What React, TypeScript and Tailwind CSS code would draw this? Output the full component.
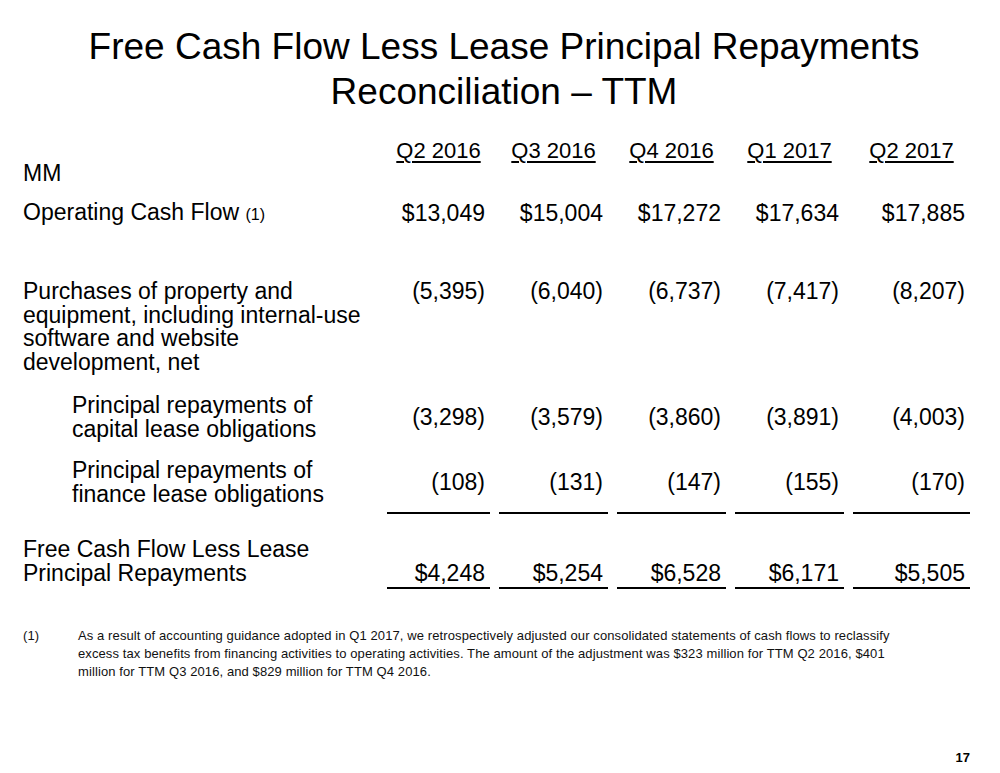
import React from "react";

const grid = "grid grid-cols-[355px_103px_109px_109px_109px_117px] gap-x-[9px]";

const headers = ["Q2 2016", "Q3 2016", "Q4 2016", "Q1 2017", "Q2 2017"];

const Values = ({ vals, align = "self-center" }: { vals: string[]; align?: string }) => (
  <>
    {vals.map((v, i) => (
      <div key={i} className={`${align} text-right pr-[5px] leading-[24px]`}>
        {v}
      </div>
    ))}
  </>
);

const Rule = ({ className }: { className: string }) => (
  <div className={`${grid} ${className}`}>
    <div />
    {headers.map((h) => (
      <div key={h} className="h-[2px] bg-black" />
    ))}
  </div>
);

export default function App() {
  return (
    <div className="w-[1000px] h-[773px] bg-white text-black font-['Liberation_Sans',Arial,sans-serif] overflow-hidden">
      <h1 className="pt-[24px] text-center text-[37px] leading-[45px] font-normal pl-[8px]">
        Free Cash Flow Less Lease Principal Repayments
        <br />
        Reconciliation – TTM
      </h1>

      <div className="pl-[23px] text-[23px]">
        {/* column headers */}
        <div className={`${grid} mt-[26px]`}>
          <div />
          {headers.map((h) => (
            <div
              key={h}
              className="text-center text-[22px] leading-none underline decoration-2 underline-offset-[3px]"
            >
              {h}
            </div>
          ))}
        </div>

        <div className="leading-[23px]">MM</div>

        <div className={`${grid} mt-[16px] leading-[23px]`}>
          <div className="whitespace-nowrap">
            Operating Cash Flow <span className="text-[16px]">(1)</span>
          </div>
          <Values vals={["$13,049", "$15,004", "$17,272", "$17,634", "$17,885"]} align="self-start" />
        </div>

        <div className={`${grid} mt-[54px]`}>
          <div className="whitespace-nowrap leading-[23.5px]">
            Purchases of property and
            <br />
            equipment, including internal-use
            <br />
            software and website
            <br />
            development, net
          </div>
          <Values vals={["(5,395)", "(6,040)", "(6,737)", "(7,417)", "(8,207)"]} align="self-start -mt-[1px]" />
        </div>

        <div className={`${grid} mt-[19px]`}>
          <div className="pl-[49px] whitespace-nowrap leading-[24px]">
            Principal repayments of
            <br />
            capital lease obligations
          </div>
          <Values vals={["(3,298)", "(3,579)", "(3,860)", "(3,891)", "(4,003)"]} />
        </div>

        <div className={`${grid} mt-[17px]`}>
          <div className="pl-[49px] whitespace-nowrap leading-[24px]">
            Principal repayments of
            <br />
            finance lease obligations
          </div>
          <Values vals={["(108)", "(131)", "(147)", "(155)", "(170)"]} />
        </div>

        <Rule className="mt-[6px]" />

        <div className={`${grid} mt-[24px]`}>
          <div className="whitespace-nowrap leading-[23.5px]">
            Free Cash Flow Less Lease
            <br />
            Principal Repayments
          </div>
          <Values vals={["$4,248", "$5,254", "$6,528", "$6,171", "$5,505"]} align="self-end" />
        </div>

        <Rule className="mt-[2px]" />
      </div>

      {/* footnote */}
      <div className="mt-[38px] pl-[23px] flex text-[13px] tracking-[0.1px] leading-[18px] text-[#111]">
        <div className="w-[55px] shrink-0">(1)</div>
        <div className="whitespace-nowrap">
          <div>
            As a result of accounting guidance adopted in Q1 2017, we retrospectively adjusted our consolidated statements of cash flows to reclassify
          </div>
          <div>
            excess tax benefits from financing activities to operating activities. The amount of the adjustment was $323 million for TTM Q2 2016, $401
          </div>
          <div>million for TTM Q3 2016, and $829 million for TTM Q4 2016.</div>
        </div>
      </div>

      <div className="mt-[70px] pr-[30px] flex justify-end text-[13px] font-bold leading-none">17</div>
    </div>
  );
}
